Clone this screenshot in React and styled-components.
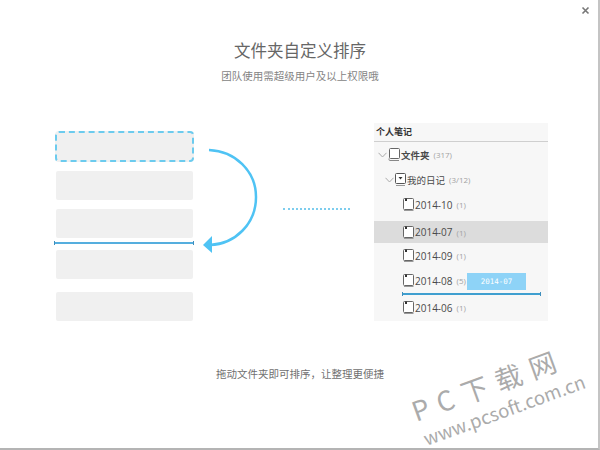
import React from "react";
import styled, { createGlobalStyle } from "styled-components";

const Global = createGlobalStyle`
  html, body {
    margin: 0;
    padding: 0;
    background: #fff;
  }
  body {
    font-family: "Noto Sans CJK SC", "Noto Sans", sans-serif;
  }
`;

const Win = styled.div`
  position: relative;
  width: 600px;
  height: 450px;
  padding-left: 2px;
  box-sizing: border-box;
  overflow: hidden;
  background: #fff;
  border-right: 2px solid #c4c4c4;
  border-bottom: 2px solid #b4b4b4;
  display: flex;
  flex-direction: column;
  align-items: center;
`;

const Close = styled.button`
  position: absolute;
  top: 6px;
  right: 8px;
  width: 9px;
  height: 9px;
  padding: 0;
  border: 0;
  background: none;
  display: flex;
`;

const Title = styled.h1`
  margin: 37px 0 0;
  height: 26px;
  line-height: 26px;
  font-size: 16.5px;
  font-weight: 400;
  color: #666;
`;

const Sub = styled.p`
  margin: 4px 0 0;
  height: 18px;
  line-height: 18px;
  font-size: 10.5px;
  color: #848484;
`;

const Stage = styled.div`
  width: 100%;
  margin-top: 38px;
  padding-left: 54px;
  box-sizing: border-box;
  display: flex;
  align-items: flex-start;
`;

const Bars = styled.div`
  position: relative;
  width: 137px;
  margin-top: 8px;
  display: flex;
  flex-direction: column;
`;

const Bar = styled.div`
  height: ${(p) => p.$h || 29}px;
  margin-top: ${(p) => p.$top || 0}px;
  box-sizing: border-box;
  background: #f0f0f0;
  border-radius: 2px;
`;

const DragBar = styled(Bar)`
  margin: 0 -1px;
  border: 2px dashed #6ccbee;
  border-radius: 4px;
`;

const InsertLine = styled.div`
  position: absolute;
  left: -2px;
  right: -1px;
  top: 111px;
  height: 2px;
  background: #55aede;

  &::before,
  &::after {
    content: "";
    position: absolute;
    top: -1px;
    width: 1px;
    height: 4px;
    background: #3f8fbd;
  }
  &::before {
    left: 0;
  }
  &::after {
    right: 0;
  }
`;

const Arrow = styled.svg`
  flex: none;
  margin: 22px 0 0 8px;
`;

const Dots = styled.div`
  width: 67px;
  height: 0;
  margin: 85px 0 0 22px;
  border-top: 2px dotted #7dcdee;
`;

const Panel = styled.div`
  position: relative;
  width: 174px;
  height: 198px;
  margin-left: 24px;
  background: #f7f7f7;
`;

const PanelHead = styled.div`
  height: 18px;
  line-height: 18px;
  padding-left: 2px;
  font-size: 9px;
  font-weight: 700;
  color: #333;
  border-bottom: 1px solid #cfcfcf;
`;

const Row = styled.div`
  height: ${(p) => p.$h || 25}px;
  margin-top: ${(p) => p.$top || 0}px;
  padding-left: ${(p) => p.$indent}px;
  background: ${(p) => (p.$active ? "#dcdcdc" : "transparent")};
  display: flex;
  align-items: center;
  font-size: 10px;
  color: #4a4a4a;
`;

const Chevron = styled.svg`
  flex: none;
  margin-right: 1px;
`;

const Icon = styled.svg`
  flex: none;
  margin-right: 1px;
`;

const Label = styled.span`
  font-family: "Open Sans", "Noto Sans CJK SC", sans-serif;
  font-size: ${(p) => (p.$cjk ? 9.5 : 10)}px;
  font-weight: ${(p) => (p.$bold ? 700 : 400)};
  white-space: nowrap;
`;

const Count = styled.span`
  margin-left: 4px;
  font-family: "Open Sans", sans-serif;
  font-size: 8px;
  color: #a2a2a2;
`;

const Ghost = styled.div`
  position: absolute;
  left: 93px;
  top: 150px;
  width: 59px;
  height: 17px;
  line-height: 17px;
  text-align: center;
  background: #8ed3f7;
  color: #fff;
  font-family: "DejaVu Sans Mono", monospace;
  font-size: 7.5px;
`;

const DropLine = styled.div`
  position: relative;
  width: 139px;
  height: 2px;
  margin-left: 28px;
  background: #3f9fd0;

  &::before,
  &::after {
    content: "";
    position: absolute;
    top: -1px;
    width: 1px;
    height: 4px;
    background: #3f8fbd;
  }
  &::before {
    left: 0;
  }
  &::after {
    right: 0;
  }
`;

const Hint = styled.p`
  margin: 44px 0 0;
  height: 18px;
  line-height: 18px;
  font-size: 10.5px;
  color: #707070;
`;

const Mark = styled.div`
  position: absolute;
  color: #ababab;
  white-space: nowrap;
  line-height: 1;
  transform-origin: left bottom;
  transform: rotate(-20deg);
  left: ${(p) => p.$x}px;
  top: ${(p) => p.$y}px;
  font-size: ${(p) => p.$size}px;
  letter-spacing: ${(p) => p.$gap}px;
  font-family: "Noto Sans CJK SC", "Noto Sans", sans-serif;
`;

const Caret = () => (
  <Chevron width="9" height="6" viewBox="0 0 9 6">
    <path d="M0.5 0.8 L4.5 5 L8.5 0.8" fill="none" stroke="#aaa" strokeWidth="1" />
  </Chevron>
);

const BookIcon = ({ kind }) => {
  if (kind === "root") {
    return (
      <Icon width="12" height="13" viewBox="0 0 12 13">
        <rect x="1.5" y="0.5" width="10" height="10" rx="1" fill="#fff" stroke="#666" />
        <path d="M1 10.5 V11.5 Q1 12.5 2 12.5 H11" fill="none" stroke="#888" />
      </Icon>
    );
  }
  if (kind === "diary") {
    return (
      <Icon width="11" height="13" viewBox="0 0 11 13">
        <rect x="0.5" y="0.5" width="10" height="10" rx="1" fill="#fff" stroke="#555" />
        <path d="M3.5 4 H7.5 L5.5 6.5 Z" fill="#333" />
        <path d="M1 12.5 H10" stroke="#999" />
      </Icon>
    );
  }
  return (
    <Icon width="11" height="13" viewBox="0 0 11 13">
      <rect x="0.5" y="0.5" width="10" height="11" rx="1" fill="#fff" stroke="#666" />
      <rect x="2" y="0.5" width="2" height="2.5" fill="#333" />
      <path d="M1 12.5 H10.5" stroke="#999" />
    </Icon>
  );
};

const months = {
  oct: { label: "2014-10", count: 1 },
  jul: { label: "2014-07", count: 1 },
  sep: { label: "2014-09", count: 1 },
  aug: { label: "2014-08", count: 5 },
  jun: { label: "2014-06", count: 1 },
};

const Month = ({ item, ...rest }) => (
  <Row $indent={29} {...rest}>
    <BookIcon />
    <Label>{item.label}</Label>
    <Count>({item.count})</Count>
  </Row>
);

export default function App() {
  return (
    <Win>
      <Global />
      <Close aria-label="关闭">
        <svg width="9" height="9" viewBox="0 0 9 9">
          <path d="M1.5 1.5 L7.5 7.5 M7.5 1.5 L1.5 7.5" stroke="#777" strokeWidth="1.6" />
        </svg>
      </Close>
      <Title>文件夹自定义排序</Title>
      <Sub>团队使用需超级用户及以上权限哦</Sub>
      <Stage>
        <Bars>
          <DragBar $h={31} />
          <Bar $top={9} />
          <Bar $top={9} />
          <Bar $top={12} />
          <Bar $top={13} />
          <InsertLine />
        </Bars>
        <Arrow width="60" height="112" viewBox="0 0 60 112">
          <path
            d="M8 5 C34 6 55 26 55 52 C55 79 34 99 9 100"
            fill="none"
            stroke="#4fc3f4"
            strokeWidth="2.5"
          />
          <path d="M2 100 L11 91 L11 108 Z" fill="#4fc3f4" />
        </Arrow>
        <Dots />
        <Panel>
          <PanelHead>个人笔记</PanelHead>
          <Row $indent={4}>
            <Caret />
            <BookIcon kind="root" />
            <Label $bold $cjk>文件夹</Label>
            <Count>(317)</Count>
          </Row>
          <Row $indent={11}>
            <Caret />
            <BookIcon kind="diary" />
            <Label $cjk>我的日记</Label>
            <Count>(3/12)</Count>
          </Row>
          <Month item={months.oct} />
          <Month item={months.jul} $top={4} $h={22} $active />
          <Month item={months.sep} />
          <Month item={months.aug} />
          <DropLine />
          <Month item={months.jun} />
          <Ghost>2014-07</Ghost>
        </Panel>
      </Stage>
      <Hint>拖动文件夹即可排序，让整理更便捷</Hint>
      <Mark $x={417} $y={397} $size={27} $gap={9}>PC下载网</Mark>
      <Mark $x={427} $y={429} $size={18.5} $gap={0}>www.pcsoft.com.cn</Mark>
    </Win>
  );
}
